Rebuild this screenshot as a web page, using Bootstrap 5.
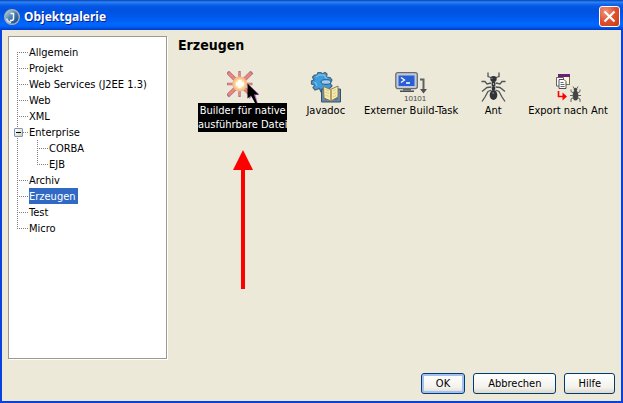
<!DOCTYPE html>
<html lang="de">
<head>
<meta charset="utf-8">
<meta name="viewport" content="width=device-width, initial-scale=1">
<title>Objektgalerie</title>
<link href="https://cdn.jsdelivr.net/npm/bootstrap@5.3.0/dist/css/bootstrap.min.css" rel="stylesheet">
<style>
body { font-family: "DejaVu Sans Condensed", "DejaVu Sans", sans-serif; font-size: 11px; line-height: 14px; color: #000; background: #ece9d8; }
.dialog-window { background: #ece9d8; border: solid #0842e0; border-width: 0 2px 2px; }
.title-strip { height: 30px; margin: 0 -2px; padding: 3px 3px 0 4px; background: linear-gradient(#0a52c8 0, #0a52c8 1px, #3c8cf4 2px, #1e74f4 3px, #0458e4 6px, #0052e0 10px, #0058ec 17px, #0066fc 23px, #0064fc 26px, #0048d4 29px, #0038c0 30px); color: #fff; }
.title-text { font-family: "Noto Sans", sans-serif; font-size: 12px; line-height: 18px; font-weight: 700; text-shadow: 1px 1px 0 #0a1e8c; }
.close-box { width: 21px; height: 21px; border: 1px solid #fff; border-radius: 3px; background: radial-gradient(circle at 30% 25%, #f09478, #e05030 50%, #c43c14); }
.pane-row { padding: 6px 12px 0 6px; gap: 11px; }
.tree-pane { width: 159px; padding: 7px 8px; background: #fff; border: 1px solid #9c9a8c; box-shadow: 1px 1px 0 #fff; }
.tree-list li { padding-left: 12px; line-height: 16px;
  background-image: repeating-linear-gradient(#808080 0 1px, transparent 1px 2px), repeating-linear-gradient(90deg, #808080 0 1px, transparent 1px 2px);
  background-size: 1px 100%, 12px 1px; background-position: 0 0, 0 8px; background-repeat: no-repeat; }
.tree-list > li:first-child { background-position: 0 8px, 0 8px; }
.tree-list li:last-child { background-size: 1px 8px, 12px 1px; }
.tree-list ul { margin-left: 8px; }
.tree-list ul > li:first-child { background-position: 0 0, 0 8px; }
.tree-list a { display: block; width: fit-content; color: #000; padding: 2px 2px 0 0; line-height: 14px; }
.tree-list a.picked { background: #316ac5; color: #fff; }
.fold-btn { width: 9px; height: 9px; margin: 0 6px 0 -15px; border: 1px solid #7898b5; border-radius: 1px; background: linear-gradient(135deg, #fff, #d4cec0); }
.pane-title { font-size: 14px; line-height: 18px; font-weight: 700; }
.gallery { gap: 19px; margin-top: 17px; padding-left: 20px; }
.gallery-item { color: #000; }
.gallery-item svg { width: 32px; height: 32px; }
.gallery-item span { white-space: nowrap; padding-top: 1px; }
.gallery-item .chosen { background: #000; color: #fff; }
.pointer-arrow { margin-top: 18px; }
.button-row { gap: 8px; padding: 14px 6px 7px; }
.xp-btn { height: 21px; padding: 0 14px; border: 1px solid #003c74; border-radius: 3px; background: linear-gradient(#fff, #f3f2ec 70%, #dcd8cc); color: #000; }
.xp-btn.main-btn { box-shadow: inset 0 0 0 2px #a4bff2; }
.help-btn { padding: 0 13px; }
</style>
<script src="https://cdn.jsdelivr.net/npm/bootstrap@5.3.0/dist/js/bootstrap.bundle.min.js"></script>
</head>
<body>
<div class="dialog-window d-flex flex-column min-vh-100" role="dialog" aria-labelledby="dlg-title">
  <header class="title-strip d-flex align-items-center">
    <svg width="16" height="16" viewBox="0 0 16 16" aria-hidden="true">
      <defs><linearGradient id="orb" x1="0" y1="0" x2="1" y2="1"><stop offset="0" stop-color="#d8e4ec"/><stop offset=".45" stop-color="#4c84b4"/><stop offset="1" stop-color="#08387c"/></linearGradient></defs>
      <circle cx="8" cy="8" r="7.3" fill="url(#orb)" stroke="#a8b0b4" stroke-width="1.4"/>
      <path d="M2.500 9.500A5.600 5.600 0 0 0 7 13.500" fill="none" stroke="#d8dce0" stroke-width="1.800"/>
      <path d="M6.500 4.500H9.500V9.500Q9.500 11.500 7.500 11.500H6" fill="none" stroke="#fff" stroke-width="1.500"/>
    </svg>
    <h1 id="dlg-title" class="title-text mb-0 ms-1">Objektgalerie</h1>
    <button type="button" class="close-box ms-auto p-0 d-flex align-items-center justify-content-center" aria-label="Schließen">
      <svg width="13" height="13" viewBox="0 0 13 13"><path d="M1.500 1.500L11.500 11.500M11.500 1.500L1.500 11.500" stroke="#fff" stroke-width="2.200"/></svg>
    </button>
  </header>

  <main class="pane-row d-flex flex-grow-1">
    <nav class="tree-pane flex-shrink-0" aria-label="Kategorien">
      <ul class="tree-list list-unstyled mb-0">
        <li><a class="text-decoration-none" href="#">Allgemein</a></li>
        <li><a class="text-decoration-none" href="#">Projekt</a></li>
        <li><a class="text-decoration-none" href="#">Web Services (J2EE 1.3)</a></li>
        <li><a class="text-decoration-none" href="#">Web</a></li>
        <li><a class="text-decoration-none" href="#">XML</a></li>
        <li>
          <div class="d-flex align-items-center">
            <button type="button" class="fold-btn p-0 d-flex align-items-center justify-content-center" aria-label="Enterprise zuklappen" aria-expanded="true"><svg width="5" height="1" viewBox="0 0 5 1"><rect width="5" height="1"/></svg></button>
            <a class="text-decoration-none" href="#">Enterprise</a>
          </div>
          <ul class="list-unstyled">
            <li><a class="text-decoration-none" href="#">CORBA</a></li>
            <li><a class="text-decoration-none" href="#">EJB</a></li>
          </ul>
        </li>
        <li><a class="text-decoration-none" href="#">Archiv</a></li>
        <li><a class="picked text-decoration-none" href="#" aria-current="true">Erzeugen</a></li>
        <li><a class="text-decoration-none" href="#">Test</a></li>
        <li><a class="text-decoration-none" href="#">Micro</a></li>
      </ul>
    </nav>

    <section class="flex-grow-1" aria-labelledby="pane-title">
      <h2 id="pane-title" class="pane-title mb-0">Erzeugen</h2>
      <div class="gallery d-flex align-items-start">
        <div class="d-flex flex-column align-items-center">
          <a class="gallery-item text-decoration-none text-center d-flex flex-column align-items-center" href="#">
            <svg viewBox="0 0 32 32" aria-hidden="true">
              <defs><radialGradient id="glow"><stop offset="0" stop-color="#fff"/><stop offset=".4" stop-color="#fff6b8"/><stop offset=".75" stop-color="#fcc888"/><stop offset="1" stop-color="#f4ac90"/></radialGradient></defs>
              <g stroke="#a87490" stroke-width="4"><path d="M.5 1L25 25M25 1L.5 25"/><path d="M12.500 0V26M0 13H25.500" stroke-width="2.400"/></g>
              <g stroke="#f08474" stroke-width="2.600"><path d="M1.500 2L24 24M24 2L1.500 24"/><path d="M12.500 1V25M1 13H24.500" stroke-width="1.400"/></g>
              <circle cx="12.800" cy="13" r="7.500" fill="url(#glow)"/>
              <path d="M12.800 9V17M9 13H17" stroke="#fff" stroke-width="3"/>
              <path d="M22 14V28L25.500 25L29 33H31L28.500 24H33Z" fill="#b070c0"/>
              <path d="M20.500 12.500V27.500L24 24.500L28 32H30L27 23.500H31.500Z"/>
            </svg>
            <span class="chosen">Builder für native<br>ausführbare Datei</span>
          </a>
          <svg class="pointer-arrow" width="20" height="139" viewBox="0 0 20 139" aria-hidden="true"><path fill="#f00" d="M10 0L20 20H12V139H8V20H0Z"/></svg>
        </div>
        <a class="gallery-item text-decoration-none text-center d-flex flex-column align-items-center" href="#">
          <svg viewBox="0 0 32 32" aria-hidden="true">
            <path d="M7 4L8 1.500H11L12 3L15 1.500L17 3L16.500 6L20 6.500L22 9L20 12L22 15L19 18L16 17L14 21H11L9.500 17.500L5 19L3 16.500L5 14L1.500 13V10L4 9L2.500 6L4.500 4Z" fill="#3c9cdc" stroke="#48627a" stroke-width="1.200"/>
            <path d="M6 6L9 4L14 4L17 8M5 11L7 15" fill="none" stroke="#74c0ec" stroke-width="1.500"/>
            <ellipse cx="16" cy="11" rx="5" ry="2.300" fill="#a4cce8" stroke="#1c5c94"/>
            <path d="M11.500 18H15V28H27V18H30.500V31H11.500Z" fill="#6888a4" stroke="#38506c"/>
            <path d="M13.500 15.500L20.500 18.500L28 15V26L21 30L14 27Z" fill="#f4ebb0" stroke="#887c58"/>
            <path d="M20.500 18.500V29.500M21.500 18V29" stroke="#b8a068"/>
            <path d="M15.500 18.500L19 20M15.500 21L19 22.500M15.500 24L19 25.500M23 20L26 18.500M23 23L26 21.500M23 26L26 24.500" stroke="#dcc888"/>
          </svg>
          <span>Javadoc</span>
        </a>
        <a class="gallery-item text-decoration-none text-center d-flex flex-column align-items-center" href="#">
          <svg viewBox="0 0 32 32" aria-hidden="true">
            <rect x=".8" y="1.600" width="21.500" height="16" rx="2" fill="#c8ccd0" stroke="#686c70" stroke-width="1.300"/>
            <rect x="3" y="4" width="17" height="11.500" fill="#2860d4" stroke="#b8c8e0"/>
            <path d="M6 6.500L9.500 9L6 11.500M11 12H15" fill="none" stroke="#fff" stroke-width="1.300"/>
            <path d="M8 18H16V19.500H8Z" fill="#686c70"/><path d="M5 19.500H19V21H5Z" fill="#484c50"/>
            <path d="M25 8.500H28.500V18" fill="none" stroke="#606060" stroke-width="2"/>
            <path d="M25 18H32L28.500 22.500Z" fill="#505050"/>
            <text x="9" y="30" font-family="Liberation Sans" font-size="8" fill="#484848">10101</text>
          </svg>
          <span>Externer Build-Task</span>
        </a>
        <a class="gallery-item text-decoration-none text-center d-flex flex-column align-items-center" href="#">
          <svg viewBox="0 0 32 32" aria-hidden="true">
            <g fill="none" stroke="#50545a" stroke-width="1.300"><path d="M14 6.500L11 5.500V1.500M19 6.500L22 5.500V1.500"/><path d="M14 12L10 13L8 10.500L4.500 10.500M19 12L23 13L25 10.500L28.500 10.500M14.500 16L10 16.500L5 20.500M18.500 16L23 16.500L28 20.500M14.500 19L11 20.500L8 26L5 30.500M18.500 19L22 20.500L25 26L28 30.500"/></g>
            <g fill="#303438"><ellipse cx="16.500" cy="8" rx="3.200" ry="3"/><ellipse cx="16.500" cy="13" rx="2" ry="3"/><ellipse cx="16.500" cy="17.500" rx="1.800" ry="2"/><ellipse cx="16.500" cy="24" rx="3.800" ry="5"/></g>
            <path d="M16.500 12V14M15.500 22L17 22M14.500 7.500H15.500" stroke="#a8acb0" stroke-width="1.200"/>
          </svg>
          <span>Ant</span>
        </a>
        <a class="gallery-item text-decoration-none text-center d-flex flex-column align-items-center" href="#">
          <svg viewBox="0 0 32 32" aria-hidden="true">
            <rect x="6.500" y="3.500" width="11" height="10" fill="#fcf8d0" stroke="#707070"/>
            <rect x="6" y="3" width="12" height="3" fill="#682080"/>
            <path d="M4.500 6.500H11.500V15H4.500Z" fill="#fff" stroke="#606060"/>
            <path d="M7 8.500H12L14 10.500V17.500H7Z" fill="#fff" stroke="#505050"/>
            <path d="M8.500 11.500H11.500M8.500 13.500H12.500M8.500 15.500H12.500" stroke="#686868"/>
            <path d="M6.500 20V25.500H12" fill="none" stroke="#f00" stroke-width="1.600"/><path d="M10.500 21.500L15 25.500L10.500 29.500Z" fill="#f00"/>
            <ellipse cx="23.500" cy="24.500" rx="2.800" ry="5" fill="#444"/><circle cx="23.500" cy="18.500" r="1.800" fill="#444"/>
            <path d="M22.500 18L21 15.500M24.500 18L26 15.500M21.500 22L19 20.500V18.500M25.500 22L28 20.500V18.500M21.500 24.500H18M25.500 24.500H29M21.500 26.500L19 28V31M25.500 26.500L28 28V31" fill="none" stroke="#606060"/>
          </svg>
          <span>Export nach Ant</span>
        </a>
      </div>
    </section>
  </main>

  <footer class="button-row d-flex justify-content-end">
    <button type="button" class="xp-btn main-btn">OK</button>
    <button type="button" class="xp-btn">Abbrechen</button>
    <button type="button" class="xp-btn help-btn">Hilfe</button>
  </footer>
</div>
</body>
</html>
